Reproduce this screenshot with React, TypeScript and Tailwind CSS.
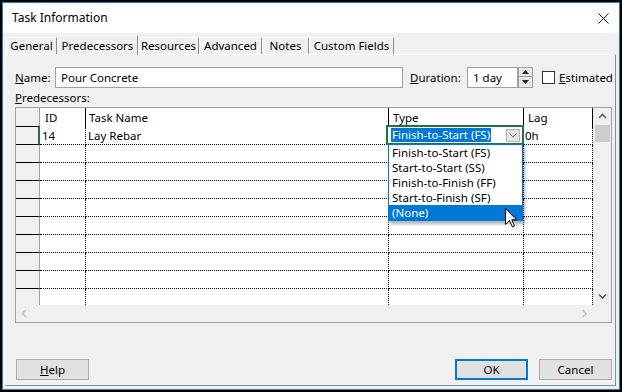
import React from 'react'

const tabs = [
  { label: 'General', w: 'w-[51px]' },
  { label: 'Predecessors', w: 'w-[81px]', active: true },
  { label: 'Resources', w: 'w-[61px]' },
  { label: 'Advanced', w: 'w-[63px]' },
  { label: 'Notes', w: 'w-[47px]' },
  { label: 'Custom Fields', w: 'w-[85px]' },
]

const rows = [
  { id: '14', name: 'Lay Rebar', lag: '0h' },
  {}, {}, {}, {}, {}, {}, {}, {}, {},
] as { id?: string; name?: string; lag?: string }[]

const types = ['Finish-to-Start (FS)', 'Start-to-Start (SS)', 'Finish-to-Finish (FF)', 'Start-to-Finish (SF)', '(None)']

const Chevron = ({ dir, color }: { dir: 'up' | 'down' | 'left' | 'right'; color: string }) => {
  const d = {
    up: 'M1 5 L4.5 1.5 L8 5',
    down: 'M1 1.5 L4.5 5 L8 1.5',
    left: 'M5 1 L1.5 4.5 L5 8',
    right: 'M1.5 1 L5 4.5 L1.5 8',
  }[dir]
  const vertical = dir === 'up' || dir === 'down'
  return (
    <svg width={vertical ? 9 : 7} height={vertical ? 7 : 9} viewBox={vertical ? '0 0 9 7' : '0 0 7 9'}>
      <path d={d} fill="none" stroke={color} strokeWidth="1.6" />
    </svg>
  )
}

export default function App() {
  return (
    <div className="w-[622px] h-[392px] bg-black p-[2px] font-['Noto_Sans','Liberation_Sans',sans-serif] text-[11.5px] leading-none text-black">
      <div className="w-full h-full border border-[#1883d7] bg-[#f0f0f0] flex flex-col">
        {/* Title bar */}
        <div className="h-[30px] bg-white flex items-center justify-between pl-[9px] pr-[10px]">
          <span className="text-[12px]">Task Information</span>
          <svg width="11" height="11" viewBox="0 0 11 11">
            <path d="M0.5 0.5 L10.5 10.5 M10.5 0.5 L0.5 10.5" stroke="#111" strokeWidth="1" />
          </svg>
        </div>

        {/* Tabs */}
        <div className="h-[21px] flex items-end pl-[3px]">
          {tabs.map((t) => (
            <div
              key={t.label}
              className={
                t.active
                  ? `${t.w} h-[20px] -mb-[1px] relative z-10 bg-[#f0f0f0] border-t border-l border-white border-r border-r-[#8a8a8a] flex items-center justify-center`
                  : `${t.w} h-[17px] bg-[#f0f0f0] border-t border-l border-white border-r border-r-[#8a8a8a] flex items-center justify-center`
              }
            >
              {t.label}
            </div>
          ))}
        </div>

        {/* Tab panel */}
        <div className="flex-1 ml-[2px] mr-[3px] mb-[3px] border-t border-l border-white border-r border-b border-r-[#8a8a8a] border-b-[#8a8a8a] pl-[9px] pt-[12px] flex flex-col">
          {/* Name row */}
          <div className="h-[21px] flex items-center">
            <span className="w-[40px]"><span className="underline">N</span>ame:</span>
            <div className="w-[348px] h-[21px] bg-white border border-[#a0a0a0] flex items-center pl-[5px]">Pour Concrete</div>
            <span className="ml-[7px] w-[57px]"><span className="underline">D</span>uration:</span>
            <div className="w-[51px] h-[21px] bg-white border border-[#a0a0a0] flex items-center pl-[5px]">1 day</div>
            <div className="w-[15px] h-[21px] border border-[#a0a0a0] bg-[#e8e8e8] flex flex-col">
              <div className="h-[9px] flex items-center justify-center border-b border-[#a0a0a0]">
                <svg width="7" height="4" viewBox="0 0 7 4"><path d="M3.5 0 L7 4 L0 4 Z" fill="#222" /></svg>
              </div>
              <div className="flex-1 flex items-center justify-center">
                <svg width="7" height="4" viewBox="0 0 7 4"><path d="M0 0 L7 0 L3.5 4 Z" fill="#222" /></svg>
              </div>
            </div>
            <div className="ml-[9px] w-[13px] h-[13px] border border-[#333] bg-white" />
            <span className="ml-[4px]"><span className="underline">E</span>stimated</span>
          </div>

          {/* Predecessors label */}
          <div className="h-[19px] flex items-center">
            <span><span className="underline">P</span>redecessors:</span>
          </div>

          {/* Grid */}
          <div className="w-[597px] h-[216px] border border-[#a0a0a0] bg-white flex flex-col relative">
            <div className="flex h-[197px]">
              <div className="w-[577px] flex flex-col">
                {/* Header */}
                <div className="h-[19px] flex">
                  <div className="w-[24px] bg-[#f0f0f0] border-r border-r-[#a0a0a0] border-b border-b-black" />
                  <div className="w-[46px] border-r border-black flex items-center pl-[5px]">ID</div>
                  <div className="w-[303px] border-r border-black flex items-center pl-[3px]">Task Name</div>
                  <div className="w-[135px] border-r border-black flex items-center pl-[4px]">Type</div>
                  <div className="w-[69px] border-r border-black flex items-center pl-[4px]">Lag</div>
                </div>
                {/* Data rows */}
                <div className="h-[178px] overflow-hidden">
                  {rows.map((r, i) => (
                    <div key={i} className="h-[18px] flex shrink-0">
                      <div className={`w-[24px] bg-[#f0f0f0] border-b border-b-black ${i === 0 ? 'border-r-2 border-r-[#217346]' : 'border-r border-r-[#a0a0a0]'}`} />
                      <div className="w-[46px] border-r border-b border-dotted border-black flex items-center pl-[2px]">{r.id}</div>
                      <div className="w-[303px] border-r border-b border-dotted border-black flex items-center pl-[2px]">{r.name}</div>
                      <div className="w-[135px] border-r border-b border-dotted border-black" />
                      <div className="w-[69px] border-r border-b border-dotted border-black flex items-center pl-[1px]">{r.lag}</div>
                    </div>
                  ))}
                </div>
              </div>
              {/* Vertical scrollbar */}
              <div className="w-[18px] bg-[#f0f0f0] flex flex-col items-center">
                <div className="h-[17px] flex items-center justify-center"><Chevron dir="up" color="#606060" /></div>
                <div className="w-[15px] h-[17px] bg-[#cdcdcd]" />
                <div className="flex-1" />
                <div className="h-[17px] flex items-center justify-center"><Chevron dir="down" color="#606060" /></div>
              </div>
            </div>
            {/* Horizontal scrollbar */}
            <div className="h-[17px] bg-[#f0f0f0] flex items-center justify-between pl-[5px] pr-[23px]">
              <Chevron dir="left" color="#c2c2c2" />
              <Chevron dir="right" color="#c2c2c2" />
            </div>

            {/* Cell editor */}
            <div className="absolute left-[370px] top-[17px] w-[138px] h-[20px] border-2 border-[#217346] bg-white flex items-center pl-[3px]">
              <span className="bg-[#0078d7] text-white px-[1px] h-[14px] flex items-center">Finish-to-Start (FS)</span>
              <div className="absolute right-[2px] top-[2px] w-[14px] h-[13px] bg-[#e5e5e5] border border-[#b5b5b5] flex items-center justify-center">
                <svg width="8" height="5" viewBox="0 0 8 5"><path d="M0.5 0.5 L4 4 L7.5 0.5" fill="none" stroke="#707070" strokeWidth="1" /></svg>
              </div>
            </div>

            {/* Dropdown list */}
            <div className="absolute left-[372px] top-[36px] w-[135px] h-[77px] border border-[#0078d7] bg-white shadow-[2px_3px_3px_rgba(0,0,0,0.3)] flex flex-col">
              {types.map((t, i) => (
                <div key={t} className={`h-[15px] shrink-0 flex items-center pl-[3px] ${i === 4 ? 'bg-[#0078d7] text-white' : ''}`}>{t}</div>
              ))}
            </div>

            {/* Mouse cursor */}
            <svg className="absolute left-[489px] top-[100px]" width="13" height="20" viewBox="0 0 13 20">
              <path d="M0.5 0.5 L0.5 16.5 L4.5 12.5 L7.5 19 L9.5 18 L6.8 11.8 L11.5 11.8 Z" fill="white" stroke="black" strokeWidth="1" strokeLinejoin="miter" />
            </svg>
          </div>

          {/* Buttons */}
          <div className="w-[597px] mt-[36px] h-[21px] flex">
            <div className="ml-[1px] w-[73px] h-[21px] border border-[#adadad] bg-[#e1e1e1] flex items-center justify-center">
              <span><span className="underline">H</span>elp</span>
            </div>
            <div className="ml-auto w-[73px] h-[21px] border-2 border-[#0078d7] bg-[#e1e1e1] flex items-center justify-center">OK</div>
            <div className="ml-[11px] w-[73px] h-[21px] border border-[#adadad] bg-[#e1e1e1] flex items-center justify-center">Cancel</div>
          </div>
        </div>
      </div>
    </div>
  )
}
